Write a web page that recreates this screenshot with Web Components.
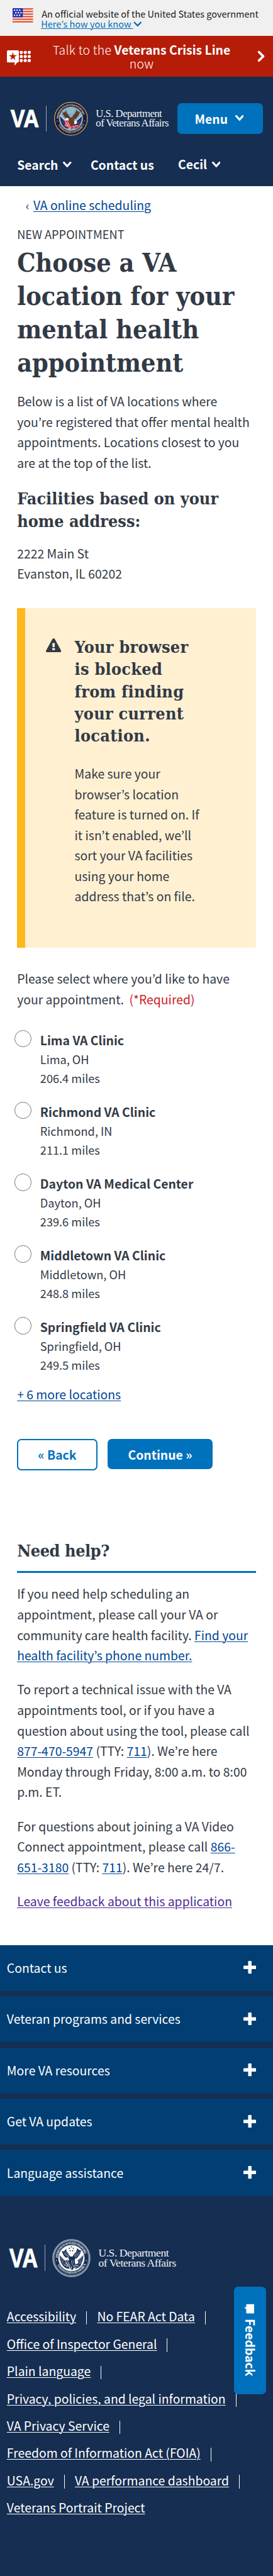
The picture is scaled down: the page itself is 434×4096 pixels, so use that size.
<!DOCTYPE html>
<html lang="en">
<head>
<meta charset="utf-8">
<title>Choose a VA location | Veterans Affairs</title>
<style>
html{font-size:67.88px;background:#fff}
body{margin:0;position:relative;width:434px;height:4096px;overflow:hidden;color:#323a45;
  font-family:"Noto Sans CJK KR","Open Sans",sans-serif;font-size:.2857rem;line-height:.48rem;white-space:nowrap}
main{padding:.207rem 40px 0 .4rem}
p{margin:0}
h1,h2{margin:0;font-family:"DejaVu Serif Condensed","DejaVu Serif",serif;font-stretch:condensed;font-weight:700}
h1{font-size:.604rem;line-height:.78rem;margin:.045rem 0 .275rem}
h2{font-size:.395rem;line-height:.52rem}
a{color:#004795;text-decoration:underline;text-decoration-thickness:1px;text-underline-offset:.03rem}
a.visited{color:#4c2c92}
.eyebrow{margin-top:.2rem;font-size:.268rem}
.lead{margin-bottom:.335rem}
.address{margin:.262rem 0 .556rem}
va-alert h2{letter-spacing:.004rem}
va-need-help h2{letter-spacing:-.006rem}
.prompt{margin:.492rem 0 .485rem}
.required{color:#cd2026;margin-left:.06rem}
.actions{display:flex;align-items:flex-start;gap:.24rem;margin:.796rem 0 1.626rem;height:.74rem}
.more{margin-top:-.11rem}
</style>
</head>
<body>
<va-gov-banner></va-gov-banner>
<va-crisis-line>Talk to the <b>Veterans Crisis Line</b><br>now</va-crisis-line>
<va-header></va-header>
<main>
  <va-breadcrumb><a href="#">VA online scheduling</a></va-breadcrumb>
  <p class="eyebrow">NEW APPOINTMENT</p>
  <h1>Choose a VA<br>location for your<br>mental health<br>appointment</h1>
  <p class="lead">Below is a list of VA locations where<br>you’re registered that offer mental health<br>appointments. Locations closest to you<br>are at the top of the list.</p>
  <h2>Facilities based on your<br>home address:</h2>
  <p class="address">2222 Main St<br>Evanston, IL 60202</p>
  <va-alert>
    <h2 slot="headline">Your browser<br>is blocked<br>from finding<br>your current<br>location.</h2>
    <p>Make sure your<br>browser’s location<br>feature is turned on. If<br>it isn’t enabled, we’ll<br>sort your VA facilities<br>using your home<br>address that’s on file.</p>
  </va-alert>
  <p class="prompt">Please select where you’d like to have<br>your appointment. <span class="required">(*Required)</span></p>
  <va-radio-option name="Lima VA Clinic" city="Lima, OH" distance="206.4 miles"></va-radio-option>
  <va-radio-option name="Richmond VA Clinic" city="Richmond, IN" distance="211.1 miles"></va-radio-option>
  <va-radio-option name="Dayton VA Medical Center" city="Dayton, OH" distance="239.6 miles"></va-radio-option>
  <va-radio-option name="Middletown VA Clinic" city="Middletown, OH" distance="248.8 miles"></va-radio-option>
  <va-radio-option name="Springfield VA Clinic" city="Springfield, OH" distance="249.5 miles"></va-radio-option>
  <p class="more"><a href="#">+ 6 more locations</a></p>
  <div class="actions">
    <va-button secondary>« Back</va-button>
    <va-button>Continue »</va-button>
  </div>
  <va-need-help>
    <h2 slot="headline">Need help?</h2>
    <p>If you need help scheduling an<br>appointment, please call your VA or<br>community care health facility. <a href="#">Find your<br>health facility’s phone number.</a></p>
    <p>To report a technical issue with the VA<br>appointments tool, or if you have a<br>question about using the tool, please call<br><a href="#">877-470-5947</a> (TTY: <a href="#">711</a>). We’re here<br>Monday through Friday, 8:00 a.m. to 8:00<br>p.m. ET.</p>
    <p>For questions about joining a VA Video<br>Connect appointment, please call <a href="#">866-<br>651-3180</a> (TTY: <a href="#">711</a>). We’re here 24/7.</p>
    <p><a class="visited" href="#">Leave feedback about this application</a></p>
  </va-need-help>
</main>
<va-footer>
  <va-accordion-item slot="menu">Contact us</va-accordion-item>
  <va-accordion-item slot="menu">Veteran programs and services</va-accordion-item>
  <va-accordion-item slot="menu">More VA resources</va-accordion-item>
  <va-accordion-item slot="menu">Get VA updates</va-accordion-item>
  <va-accordion-item slot="menu">Language assistance</va-accordion-item>
</va-footer>
<va-feedback>Feedback</va-feedback>

<script>
class Base extends HTMLElement {
  connectedCallback() {
    if (this.shadowRoot) return;
    const t = document.createElement('template');
    t.innerHTML = this.view();
    this.attachShadow({ mode: 'open' }).append(t.content.cloneNode(true));
  }
}
const chevron = (w, h, sw, color, cap) =>
  `<svg style="width:${w / 100}rem;height:${h / 100}rem" viewBox="0 0 ${w} ${h}" fill="none" stroke="${color}" stroke-width="${sw}" stroke-linecap="${cap}" stroke-linejoin="${cap === 'round' ? 'round' : 'miter'}"><path d="M${sw / 2} ${sw / 2}L${w / 2} ${h - sw * .72}L${w - sw / 2} ${sw / 2}"/></svg>`;

customElements.define('va-gov-banner', class extends Base {
  view() {
    let stripes = '', stars = '';
    for (let i = 0; i < 6; i++) stripes += `<rect y="${i * 6 + .2}" width="48" height="3.3" fill="#df4a2c"/>`;
    [[3, 3.2], [9, 3.2], [15, 3.2], [6, 9.2], [12, 9.2], [18, 9.2], [3, 15.2], [9, 15.2], [15, 15.2]]
      .forEach(([x, y]) => stars += `<rect x="${x}" y="${y}" width="3.2" height="3" fill="#fff"/>`);
    return `<style>
:host{display:flex;height:.84rem;background:#f0f0f0;color:#1b1b1b;font-size:.2143rem;line-height:.24rem}
.flag{width:.48rem;height:.34rem;margin:.195rem .18rem 0 .3rem;flex:none}
.text{padding-top:.2rem}
.text div:first-child{padding-left:.015rem}
.know{display:flex;color:#0071bc}
a{color:inherit;text-decoration:underline;text-decoration-thickness:1.4px;text-underline-offset:.02rem;white-space:pre}
svg{display:block}.know svg{margin-top:.065rem}
</style>
<svg class="flag" viewBox="0 0 48 34"><rect width="48" height="34" fill="#fff"/>${stripes}<rect width="24" height="21.5" fill="#2234b4"/>${stars}</svg>
<div class="text"><div>An official website of the United States government</div>
<div class="know"><a href="#">Here’s how you know </a>${chevron(20, 12.5, 3.4, '#0071bc', 'butt')}</div></div>`;
  }
});

customElements.define('va-crisis-line', class extends Base {
  view() {
    let dots = '';
    for (const y of [4.7, 14.3, 24]) for (const x of [33.6, 43, 52.4]) dots += `<circle cx="${x}" cy="${y}" r="3.75"/>`;
    return `<style>
:host{display:flex;align-items:center;height:.96rem;background:#b51d09;color:#fff;font-weight:300;line-height:.32rem}
::slotted(b){font-weight:700!important;letter-spacing:0}
.icon{width:.56rem;height:.36rem;margin:.08rem 0 0 .16rem;flex:none}
.label{flex:1;text-align:center;padding:.028rem .11rem 0 0;letter-spacing:.0035rem}
.go{width:.18rem;height:.28rem;margin:.01rem .195rem 0 0;flex:none}
svg{display:block}
</style>
<svg class="icon" viewBox="0 0 56 36" fill="#fff"><path d="M2.5 0h23A2.5 2.5 0 0 1 28 2.500V26a2.500 2.500 0 0 1-2.500 2.500H24L18 36V28.500H2.500A2.500 2.500 0 0 1 0 26V2.500A2.500 2.500 0 0 1 2.500 0z"/><path fill="#b51d09" d="M14 4.500l2.200 7h7.300l-5.900 4.300 2.300 7L14 18.500l-5.900 4.300 2.300-7L4.500 11.500h7.300z"/>${dots}</svg>
<div class="label"><slot></slot></div>
<svg class="go" viewBox="0 0 18 28" fill="none" stroke="#fff" stroke-width="5.500" stroke-linecap="round" stroke-linejoin="round"><path d="M4 4l10 10L4 24"/></svg>`;
  }
});

customElements.define('va-logo', class extends Base {
  seal() {
    const mono = this.hasAttribute('mono');
    const c = mono
      ? { edge: '#162e51', rim: '#dfe4ea', band: '#162e51', field: '#fff', bird: '#162e51', dark: '#162e51', words: '#e6eaf0', star: '#162e51', red: '#162e51', head: '#fff', flag: '#3a4d6b' }
      : { edge: '#1c1a3a', rim: '#d5b65c', band: '#181a46', field: '#7db2d6', bird: '#6b4026', dark: '#452818', words: '#d8cd96', star: '#f0dd6a', red: '#c4283a', head: '#fff', flag: '#232c62' };
    const star = (x, y) => `<path transform="translate(${x} ${y})" fill="${c.star}" d="M0-2.300l.6 1.600h1.700L.9.4l.5 1.700L0 1.100l-1.400 1L-.9.400-2.300-.700H-.600z"/>`;
    let specks = '';
    for (const [x, y] of [[24, 46], [27, 51], [25, 55], [30, 55], [31, 61], [64, 49], [68, 46], [67, 53], [62, 55], [65, 59], [69, 57]])
      specks += `<circle cx="${x}" cy="${y}" r=".8" fill="#dfe4f2"/>`;
    return `<svg class="seal" viewBox="0 0 92 92">
<defs><path id="top" d="M13.200 49A33 33 0 1 1 78.800 49"/><path id="bottom" d="M9.800 55A37.200 37.200 0 0 0 82.200 55"/></defs>
<circle cx="46" cy="46" r="45.500" fill="${c.edge}"/>
<circle cx="46" cy="46" r="43.300" fill="${c.band}" stroke="${c.rim}" stroke-width="2" ${mono ? 'stroke-dasharray="2 .7"' : ''}/>
${mono ? `<circle cx="46" cy="46" r="45" fill="none" stroke="${c.rim}" stroke-width=".8"/><circle cx="46" cy="46" r="41" fill="none" stroke="${c.rim}" stroke-width=".8"/>` : ''}
<circle cx="46" cy="46" r="31" fill="${c.field}" stroke="${c.rim}" stroke-width="1.200"/>
<g font-family="Liberation Serif" font-weight="700" font-size="7" fill="${c.words}">
<text textLength="95"><textPath href="#top" startOffset="3">DEPARTMENT OF VETERANS AFFAIRS</textPath></text>
<text textLength="86"><textPath href="#bottom" startOffset="8">UNITED STATES OF AMERICA</textPath></text></g>
<circle cx="10" cy="52" r="1.200" fill="${c.words}"/><circle cx="82" cy="52" r="1.200" fill="${c.words}"/>
<path d="M17 37L41 61 37 72C27 69 18 60 17 37z" fill="${c.flag}"/><path d="M75 37L52 59 56 72C66 68 74 60 75 37z" fill="${c.flag}"/>
<path d="M16.500 37L40 60M75.500 37L53 58" stroke="#e9edf3" stroke-width="2"/>${specks}
${star(46, 19)}${star(41, 22.500)}${star(51, 22.500)}${star(43, 28)}${star(49, 28)}
<path fill="${c.bird}" d="M23 29c4 2 7 0 11-6-1 5 1 8 4 11l5 8h6c2-4 4-7 7-10 3-4 4-7 3-10 4 4 7 6 11 6-2 3-1 4-3 6 0 3-2 5-4 7-2 4-5 6-9 7l1 11-6 8-5 2-5-3-1-9 3-8c-5 0-8-2-10-6-3-2-4-4-5-7-2-2-2-4-3-7z"/>
<path fill="none" stroke="${mono ? '#fff' : c.dark}" stroke-width=".9" d="M27 31l13 11M29 36l11 8M31 29l10 11M68 30L53 42M65 36L54 45M61 28l-8 12M47 50l-3 15M51 51l-3 15"/>
<path fill="${c.head}" d="M33 45c3-2 6-1 7 2l-2 4-5-2-2 2c0-3 0-4 2-6zM56 51c4 0 7 3 6 7l-6 3-2-5z"/>
<path fill="${c.red}" d="M28 53l9-3 8 7-1 10-4 6-3-4-9-4c4-1 4-3 2-5zM49 64c6 2 12 0 16-4 1 2 3 2 5 1-4 7-9 10-19 9l-3 5-5-3 1-8z"/>
<path fill="none" stroke="#f5f2ee" stroke-width="1.500" d="M31 53l9 12M35 51l7 12M29 62l10 5M42 64l-1 9M46 66l-1 8M50 67l8 1M56 64l8 1M31 57l8 8"/>
</svg>`;
  }
  view() {
    const v = this.hasAttribute('mono') ? 43.500 : 40.300;
    return `<style>
:host{display:flex;align-items:center;color:#fff;font-weight:400}
svg{display:block;flex:none;overflow:visible}
.va{width:.7rem;height:var(--mark,.4rem);margin-right:.145rem}
.rule{width:1px;height:.61rem;background:#9aa5b4;margin-right:var(--gap,.17rem)}
.seal{width:var(--seal,.82rem);height:var(--seal,.82rem)}
.name{font-family:"Liberation Serif",serif;font-size:var(--name,.247rem);line-height:var(--lead,.22rem);letter-spacing:var(--track,-.008rem);margin:var(--drop,.024rem) 0 0 var(--nameGap,.165rem);color:#eef1f5}
</style>
<svg class="va" viewBox="0 0 70 ${v}"><text x="1" y="${v}" textLength="67" lengthAdjust="spacingAndGlyphs" font-family="Liberation Sans" font-weight="700" font-size="${v / .69}" fill="#fff" stroke="#fff" stroke-width="1.400">VA</text></svg>
<div class="rule"></div>${this.seal()}
<div class="name">U.S. Department<br>of Veterans Affairs</div>`;
  }
});

customElements.define('va-header', class extends Base {
  view() {
    const ch = chevron(20, 14, 4.6, '#fff', 'round');
    return `<style>
:host{display:block;height:2.56rem;background:#162e51;color:#fff;font-weight:700}
.brand{display:flex;align-items:center;height:1.95rem}
va-logo{margin-left:.23rem;width:3.93rem}
.menu{display:flex;align-items:center;width:2rem;height:.72rem;box-sizing:border-box;padding-left:.4rem;gap:.17rem;border-radius:.1rem;background:#0071bc}
nav{display:flex;margin-top:-.125rem}
nav div{display:flex;align-items:center;gap:.11rem}
.search{margin-left:.4rem;width:1.72rem}.contact{width:2.05rem}.name{margin-top:-.02rem}
svg{display:block}.menu svg{margin-top:-.01rem}.menu span{margin-top:.015rem}
nav svg{margin-top:-.01rem}
</style>
<div class="brand"><va-logo></va-logo><div class="menu"><span>Menu</span>${ch}</div></div>
<nav><div class="search">Search${ch}</div><div class="contact">Contact us</div><div><span class="name">Cecil</span>${ch}</div></nav>`;
  }
});

customElements.define('va-breadcrumb', class extends Base {
  view() {
    return `<style>:host{display:flex;color:#004795}span{width:.18rem;margin-left:.2rem}</style><span>‹</span><slot></slot>`;
  }
});

customElements.define('va-alert', class extends Base {
  view() {
    return `<style>
:host{display:flex;box-sizing:border-box;width:5.595rem;height:7.96rem;padding:.657rem 0 0 .48rem;border-left:.2rem solid #fdb81e;background:#fff0d2}
svg{display:block;width:.36rem;height:.33rem;margin:.055rem .315rem 0 0;flex:none}
.body{margin-top:.388rem}
</style>
<svg viewBox="0 0 36 33"><path fill="#323a45" d="M15.300 1.500a3.200 3.200 0 0 1 5.400 0L35.500 28.500A3 3 0 0 1 33 33H3A3 3 0 0 1 .500 28.500z"/><path fill="#fff0d2" d="M15 11h6l-.6 9.500h-4.800zM15.400 22.800h5.200a.6.6 0 0 1 .6.6v3.600a.6.6 0 0 1-.6.600h-5.200a.6.6 0 0 1-.6-.600v-3.600a.6.6 0 0 1 .6-.600z"/></svg>
<div><slot name="headline"></slot><div class="body"><slot></slot></div></div>`;
  }
});

customElements.define('va-radio-option', class extends Base {
  view() {
    const a = n => this.getAttribute(n);
    return `<style>
:host{display:flex;height:1.68rem;line-height:.44rem}
i{box-sizing:border-box;width:.4rem;height:.4rem;border:1px solid #757575;border-radius:50%;margin:0 .2rem 0 -.06rem;flex:none;background:#fff}
.label{margin-top:.022rem}
.detail{font-size:.268rem}
</style><i></i><div class="label"><b>${a('name')}</b><div class="detail">${a('city')}<br>${a('distance')}</div></div>`;
  }
});

customElements.define('va-button', class extends Base {
  view() {
    return `<style>
:host{display:block;box-sizing:border-box;width:2.46rem;height:.72rem;line-height:.745rem;border-radius:.1rem;background:#0071bc;color:#fff;font-weight:700;text-align:center}
:host([secondary]){width:1.88rem;height:.74rem;line-height:.685rem;border:.04rem solid #0071bc;background:#fff;color:#0071bc}
</style><slot></slot>`;
  }
});

customElements.define('va-need-help', class extends Base {
  view() {
    return `<style>
:host{display:block;height:9.494rem;width:5.595rem}
.head{height:.735rem;border-bottom:3px solid #0071bc;margin-bottom:.255rem}
::slotted(p){margin-bottom:.32rem!important}
</style><div class="head"><slot name="headline"></slot></div><slot></slot>`;
  }
});

customElements.define('va-accordion-item', class extends Base {
  view() {
    return `<style>
:host{display:flex;justify-content:space-between;align-items:center;height:1.08rem;margin-bottom:.12rem;padding:0 .4rem 0 .16rem;background:#003e73;color:#fff}
svg{display:block;width:.3rem;height:.3rem;margin-top:-.02rem}
</style><span><slot></slot></span>
<svg viewBox="0 0 30 30" fill="#fff"><rect x="11" width="8" height="30" rx="1.500"/><rect y="11" width="30" height="8" rx="1.500"/></svg>`;
  }
});

customElements.define('va-footer', class extends Base {
  view() {
    const rows = [['Accessibility', 'No FEAR Act Data'], ['Office of Inspector General'], ['Plain language'],
      ['Privacy, policies, and legal information'], ['VA Privacy Service'], ['Freedom of Information Act (FOIA)'],
      ['USA.gov', 'VA performance dashboard'], ['Veterans Portrait Project']];
    return `<style>
:host{display:block;height:14.800rem;background:#162e51;color:#fff}
va-logo{height:.92rem;margin:.99rem 0 0 .2rem;--mark:.435rem;--seal:.9rem;--gap:.17rem;--name:.26rem;--lead:.24rem;--track:-.007rem;--nameGap:.175rem;--drop:0rem}
.links{margin-top:.598rem}
.row{display:flex;align-items:center;height:.64rem}
a{color:#fff;margin-left:.24rem;text-decoration:underline;text-decoration-thickness:1px;text-underline-offset:.025rem}
a:first-child{margin-left:.16rem}
i{width:1px;height:.32rem;background:#fff;margin:.06rem 0 0 .235rem}
</style><slot name="menu"></slot><va-logo mono></va-logo>
<div class="links">${rows.map((r, n) => `<div class="row">${r.map(t => `<a href="#">${t}</a>${n < 7 ? '<i></i>' : ''}`).join('')}</div>`).join('')}</div>`;
  }
});

customElements.define('va-feedback', class extends Base {
  view() {
    return `<style>
:host{position:absolute;box-sizing:border-box;right:.16rem;top:53.560rem;width:.76rem;height:2.53rem;padding-top:.4rem;border-radius:.1rem;background:#0071bc;color:#fff;font-weight:700;display:flex;flex-direction:column;align-items:center}
svg{display:block;width:.24rem;height:.24rem;margin:0 .04rem .12rem 0}
span{writing-mode:vertical-rl;line-height:.76rem}
</style><svg viewBox="0 0 24 24" fill="#fff"><path d="M7 1h15a2 2 0 0 1 2 2v18a2 2 0 0 1-2 2H7a2 2 0 0 1-2-2v-8L0 9l5-1V3a2 2 0 0 1 2-2z"/></svg><span><slot></slot></span>`;
  }
});
</script>
</body>
</html>
